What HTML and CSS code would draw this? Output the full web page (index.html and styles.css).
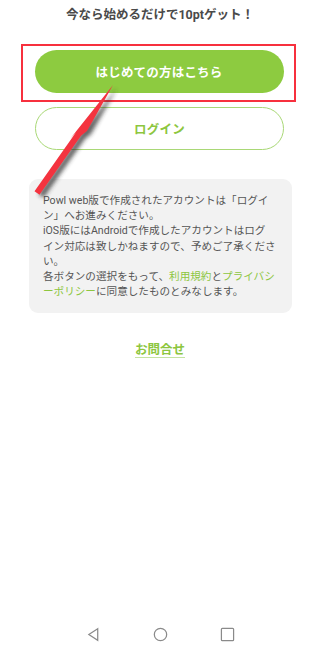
FILE: index.html
```html
<!DOCTYPE html>
<html lang="ja">
<head>
<meta charset="utf-8">
<link rel="stylesheet" href="styles.css">
</head>
<body>
<div class="page">
  <p class="lead">今なら始めるだけで10ptゲット！</p>
  <div class="highlight">
    <a class="btn btn-primary">はじめての方はこちら</a>
  </div>
  <a class="btn btn-outline">ログイン</a>
  <div class="notice">
    <p>Powl web版で作成されたアカウントは「ログイ<br>ン」へお進みください。<br>iOS版にはAndroidで作成したアカウントはログ<br>イン対応は致しかねますので、予めご了承くださ<br>い。<br>各ボタンの選択をもって、<span class="link">利用規約</span>と<span class="link">プライバシ<br>ーポリシー</span>に同意したものとみなします。</p>
  </div>
  <a class="contact">お問合せ</a>
  <nav class="navbar">
    <svg class="nav-icon" viewBox="0 0 16 16"><path d="M12.5 1.8 L3 8 L12.5 14.2 Z" /></svg>
    <svg class="nav-icon" viewBox="0 0 16 16"><circle cx="8" cy="8" r="6.6" /></svg>
    <svg class="nav-icon" viewBox="0 0 16 16"><rect x="1.5" y="1.5" width="13" height="13" rx="1" /></svg>
  </nav>
</div>
<svg class="arrow" viewBox="0 0 320 652" width="320" height="652">
  <defs>
    <filter id="blur" x="-20%" y="-20%" width="140%" height="140%">
      <feGaussianBlur stdDeviation="2"/>
    </filter>
  </defs>
  <polygon class="arrow-shadow" filter="url(#blur)" transform="translate(4 3)" points="113,85 87,131 81,135.7 39.5,194.7 34.5,191.3 76,132.3 70,139"/>
  <polygon class="arrow-body" points="113,85 87,131 81,135.7 39.5,194.7 34.5,191.3 76,132.3 70,139"/>
</svg>
</body>
</html>
```
FILE: styles.css
```css
html, body {
  margin: 0;
  padding: 0;
  background: #ffffff;
}
body {
  position: relative;
  width: 320px;
  height: 652px;
  overflow: hidden;
  font-family: Roboto, "Noto Sans CJK JP", "Noto Sans", sans-serif;
}
.page {
  display: flex;
  flex-direction: column;
  align-items: flex-start;
  height: 652px;
}
.lead {
  margin: 6px 0 0;
  width: 100%;
  text-align: center;
  font-size: 12.5px;
  line-height: 18px;
  font-weight: 700;
  color: #4a4a4a;
}
.highlight {
  margin: 20px 0 0 21px;
  width: 275px;
  height: 58px;
  box-sizing: border-box;
  border: 2.5px solid #f7303e;
  padding: 3.5px 10px 0 11.5px;
}
.btn {
  display: flex;
  align-items: center;
  justify-content: center;
  width: 249px;
  height: 43px;
  box-sizing: border-box;
  border-radius: 22px;
  font-size: 12.5px;
  font-weight: 700;
  letter-spacing: 0.2px;
}
.btn-primary {
  background: #8dcb40;
  color: #ffffff;
}
.btn-outline {
  margin: 5px 0 0 35px;
  border: 1.5px solid #a9d876;
  color: #8dc63f;
}
.notice {
  margin: 29px 0 0 29px;
  width: 263px;
  height: 134px;
  box-sizing: border-box;
  background: #f2f2f2;
  border-radius: 9px;
  padding: 14px 0 0 14px;
}
.notice p {
  margin: 0;
  font-size: 10.6px;
  line-height: 15.2px;
  color: #555555;
  white-space: nowrap;
}
.link {
  color: #8dc63f;
}
.contact {
  margin: 28px 0 0 0;
  align-self: center;
  font-size: 12.5px;
  line-height: 18px;
  font-weight: 700;
  color: #8dc63f;
  text-decoration: underline;
  text-decoration-color: #c4e3a0;
  text-underline-offset: 3px;
}
.navbar {
  margin-top: auto;
  width: 100%;
  height: 36px;
  display: flex;
  align-items: center;
  justify-content: center;
  gap: 52px;
}
.nav-icon {
  width: 15px;
  height: 15px;
  fill: none;
  stroke: #8a8a8a;
  stroke-width: 1.3;
}
.arrow {
  position: absolute;
  left: 0;
  top: 0;
  pointer-events: none;
}
.arrow-shadow {
  fill: #2e2e2e;
  opacity: 0.75;
}
.arrow-body {
  fill: #f4333f;
}
```
